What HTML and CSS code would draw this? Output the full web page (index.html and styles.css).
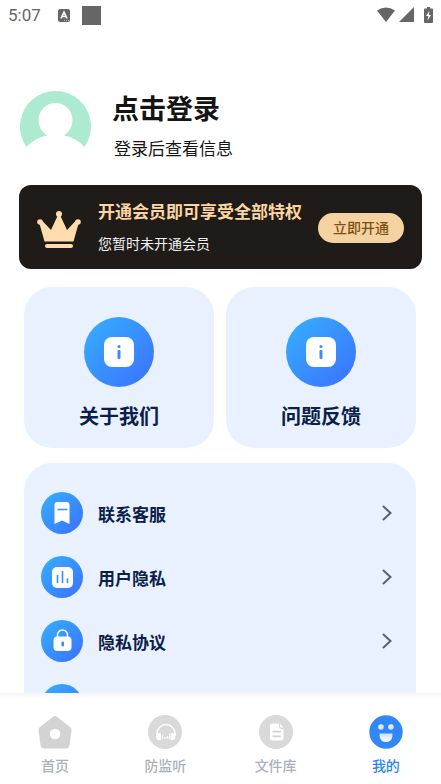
FILE: index.html
```html
<!DOCTYPE html>
<html lang="zh-CN">
<head>
<meta charset="utf-8">
<meta name="viewport" content="width=device-width, initial-scale=1">
<title>我的</title>
<link rel="stylesheet" href="styles.css">
</head>
<body>
<svg class="defs" aria-hidden="true">
  <defs>
    <linearGradient id="smile" x1="0" y1="0" x2="1" y2="1"><stop offset="0" stop-color="#fff"/><stop offset="1" stop-color="#b9d8ff"/></linearGradient>
    <linearGradient id="mouth" x1="0" y1="0" x2="0" y2="1"><stop offset="0" stop-color="#c8e0ff"/><stop offset="1" stop-color="#fff"/></linearGradient>
  </defs>
</svg>
<header class="status">
  <span class="time">5:07</span>
  <svg width="12" height="13" viewBox="0 0 12 13"><rect width="12" height="13" rx="2" fill="#666"/><path d="M3 9.500 6 3.200 9 9.500M4.200 7.500h3.600" fill="none" stroke="#fff" stroke-width="1.600"/><path d="M6 11.500h5" stroke="#bbb" stroke-dasharray="1 1"/></svg>
  <span class="square"></span>
  <span class="signals">
    <svg width="18" height="16" viewBox="0 0 18 16"><path d="M0 3.500Q9-2.500 18 3.500L9 15z" fill="#666"/></svg>
    <svg width="15" height="16" viewBox="0 0 15 16"><path d="M15 0v15H0z" fill="#666"/></svg>
    <svg class="battery" width="9" height="16" viewBox="0 0 9 16"><path d="M1 1.500h2V0h3v1.500h2q1 0 1 1V15q0 1-1 1H1q-1 0-1-1V2.500q0-1 1-1z" fill="#666"/><path d="M5.500 4 2 9h2.300L3.500 13.500 7 8H4.800z" fill="#fff"/></svg>
  </span>
</header>
<main>
  <a class="profile" href="#login">
    <svg width="71" height="71" viewBox="0 0 71 71"><path d="M6.500 56A35.500 35.500 0 1 1 64.500 56Q56 46.500 44 44.500C49 41 52.500 35.500 52.500 29A17 17 0 0 0 18.500 29C18.500 35.500 22 41 27 44.500Q15 46.500 6.500 56z" fill="#adead2"/></svg>
    <span class="who"><strong>点击登录</strong><span>登录后查看信息</span></span>
  </a>
  <section class="vip">
    <svg width="44" height="42" viewBox="0 -4 44 42"><g fill="#fedcae"><circle cx="3" cy="11" r="2.800"/><circle cx="22" cy="3" r="3"/><circle cx="41" cy="11" r="2.800"/><path d="M2 11 5 9.500 14 19 20.500 5h3L30 19l9-9.500L42 11 36.500 30.500h-29z"/><rect x="8" y="33" width="28" height="4" rx="2"/></g></svg>
    <div class="vip-text"><h2>开通会员即可享受全部特权</h2><p>您暂时未开通会员</p></div>
    <button type="button">立即开通</button>
  </section>
  <div class="cards">
    <a class="card" href="#about"><span class="disc large"><svg width="30" height="30" viewBox="0 0 30 30"><rect width="30" height="30" rx="8" fill="#fff"/><circle cx="15" cy="9.500" r="1.600" fill="#3a8cff"/><rect x="13.500" y="13" width="3" height="9" rx="1" fill="#3a8cff"/></svg></span>关于我们</a>
    <a class="card" href="#feedback"><span class="disc large"><svg width="30" height="30" viewBox="0 0 30 30"><rect width="30" height="30" rx="8" fill="#fff"/><circle cx="15" cy="9.500" r="1.600" fill="#3a8cff"/><rect x="13.500" y="13" width="3" height="9" rx="1" fill="#3a8cff"/></svg></span>问题反馈</a>
  </div>
  <ul class="list">
    <li><a href="#service"><span class="disc"><svg width="24" height="24" viewBox="0 0 24 24"><path d="M7 1h8.500q3 0 3 3v19L11 19.500 3.500 23V4q0-3 3-3z" fill="#fff" transform="translate(1 0)"/><path d="M8 8.500h9" stroke="#3a8cff" stroke-width="1.300" stroke-linecap="round"/></svg></span><span>联系客服</span><svg class="chevron" width="10" height="16" viewBox="0 0 10 16"><path d="m1.500 1.500 7 6.500-7 6.500"/></svg></a></li>
    <li><a href="#privacy"><span class="disc"><svg width="24" height="24" viewBox="0 0 24 24"><rect x="2" y="2" width="21" height="21" rx="5" fill="#fff"/><path d="M7.500 10.500v7M12.500 6.500v11M17.500 14v3.500" stroke="#3a8cff" stroke-width="1.600" stroke-linecap="round"/></svg></span><span>用户隐私</span><svg class="chevron" width="10" height="16" viewBox="0 0 10 16"><path d="m1.500 1.500 7 6.500-7 6.500"/></svg></a></li>
    <li><a href="#agreement"><span class="disc"><svg width="24" height="24" viewBox="0 0 24 24"><path d="M7.500 9V6a5 5 0 0 1 10 0v3" fill="none" stroke="#fff" stroke-width="1.600"/><rect x="3.500" y="7.500" width="18" height="14.500" rx="4" fill="#fff"/><rect x="11.500" y="12.500" width="2.500" height="5" rx="1" fill="#3a8cff"/></svg></span><span>隐私协议</span><svg class="chevron" width="10" height="16" viewBox="0 0 10 16"><path d="m1.500 1.500 7 6.500-7 6.500"/></svg></a></li>
    <li><span class="disc"></span></li>
  </ul>
</main>
<nav>
  <a href="#home"><svg width="34" height="34" viewBox="0 0 34 34"><path d="M15 1.700q2-1.400 4 0L32 12q1.700 1.400 1.500 3.500L31.500 30q-.5 3.500-4 3.500h-21Q3 33.500 2.500 30L.5 15.500Q.3 13.400 2 12z" fill="#d3d3d3"/><circle cx="17" cy="19" r="5.300" fill="#fff"/></svg>首页</a>
  <a href="#listen"><svg width="34" height="34" viewBox="0 0 34 34"><circle cx="17" cy="17" r="17" fill="#d9d9d9"/><path d="M9 21v-2.500a9 9 0 0 1 18 0V21" fill="none" stroke="#fff" stroke-width="1.400"/><path d="M8 18.500q4-.5 5 0v6.500q-2 .5-4-.5-1.500-2-1-6zM27.500 18.500q-4-.5-5 0v6.500q2 .5 4-.5 1.500-2 1-6z" fill="#fff"/><path d="M14.500 20v4M17 22v2M19.500 21v3M21.500 18.500v5.500" stroke="#fff" stroke-width="1.200"/></svg>防监听</a>
  <a href="#files"><svg width="34" height="34" viewBox="0 0 34 34"><circle cx="17" cy="17" r="17" fill="#d9d9d9"/><path d="M13.500 8.500h6.500v3q0 2.500 2.500 2.500h2v9q0 2.500-2.500 2.500h-8.500Q11 25.500 11 23V11q0-2.500 2.500-2.500zM21 8.500l3.500 4h-2q-1.500 0-1.500-1.500z" fill="#fff"/><path d="M13.500 16.700h8.500M13.500 21.300h8.500" stroke="#d2d2d2" stroke-width="1.700"/></svg>文件库</a>
  <a class="active" href="#me" aria-current="page"><svg width="34" height="34" viewBox="0 0 34 34"><circle cx="17" cy="17" r="16.700" fill="#3087f5"/><circle cx="12" cy="12" r="2.800" fill="url(#smile)"/><circle cx="22" cy="12" r="2.800" fill="url(#smile)"/><path d="M10.500 18.500h13q.5 8.500-6.500 8.500t-6.500-8.500z" fill="url(#mouth)"/></svg>我的</a>
</nav>
</body>
</html>
```

FILE: styles.css
```css
* { box-sizing: border-box; }
body {
  margin: 0;
  height: 100vh;
  display: flex;
  flex-direction: column;
  overflow: hidden;
  background: #fff;
  color: #0a2048;
  font-family: Roboto, "Noto Sans CJK SC", sans-serif;
  font-weight: 600;
}
svg { display: block; flex: none; }
.defs { position: absolute; width: 0; height: 0; }
a { color: inherit; text-decoration: none; }
h2, p, ul { margin: 0; padding: 0; }

.status {
  flex: none;
  display: flex;
  align-items: center;
  height: 30px;
  padding: 0 8px;
  color: #666;
}
.time { width: 50px; font-size: 17px; font-weight: 400; }
.square { width: 19px; height: 19px; margin-left: 12px; background: #666; }
.signals { display: flex; gap: 4px; margin-left: auto; }
.battery { margin-left: 6px; }

main { flex: 1; min-height: 0; overflow: hidden; }
.profile {
  display: flex;
  gap: 21px;
  padding: 61px 20px 0;
  color: #141414;
}
.who { display: flex; flex-direction: column; gap: 8px; }
.who strong { font-size: 27px; line-height: 38px; font-weight: 600; }
.who span { padding-left: 2px; font-size: 17px; line-height: 24px; font-weight: 400; }

.vip {
  display: flex;
  align-items: center;
  margin: 23px 19px 18px;
  padding: 11px 18px 9px;
  border-radius: 12px;
  background: #1f1b18;
}
.vip-text { flex: 1; margin-left: 17px; white-space: nowrap; }
.vip h2 { color: #fbd5a3; font-size: 17px; line-height: 32px; font-weight: 600; }
.vip p { color: #f2f2f2; font-size: 14px; line-height: 32px; font-weight: 400; }
.vip button {
  width: 86px;
  height: 30px;
  padding: 0 0 2px;
  border: 0;
  border-radius: 15px;
  background: #f5d2a1;
  color: #7c5012;
  font: inherit;
  font-size: 14px;
  font-weight: 500;
}

.cards {
  display: grid;
  grid-template-columns: 1fr 1fr;
  gap: 12px;
  margin: 0 25px 15px 24px;
}
.card {
  display: flex;
  flex-direction: column;
  align-items: center;
  gap: 15px;
  padding: 30px 0 16px;
  border-radius: 28px;
  background: #e9f1ff;
  font-size: 20px;
  line-height: 30px;
}
.disc {
  flex: none;
  display: grid;
  place-items: center;
  width: 42px;
  height: 42px;
  border-radius: 50%;
  background: linear-gradient(135deg, #36b0ff, #3b70ff);
}
.large { width: 70px; height: 70px; }

.list {
  margin: 0 25px 0 24px;
  padding: 18px 24px 18px 17px;
  border-radius: 28px;
  background: #e9f1ff;
  list-style: none;
  font-size: 17px;
}
.list li, .list a { display: flex; align-items: center; height: 64px; }
.list a { flex: 1; gap: 15px; }
.chevron { margin-left: auto; fill: none; stroke: #5c626e; stroke-width: 2; stroke-linecap: round; }

nav {
  flex: none;
  display: grid;
  grid-template-columns: repeat(4, 1fr);
  padding: 22px 0 8px;
  background: linear-gradient(#f4f4f4, #fff 5px);
  color: #adb1b8;
  font-size: 14px;
  font-weight: 500;
  line-height: 20px;
}
nav a { display: flex; flex-direction: column; align-items: center; gap: 7px; }
nav .active { color: #2b83f6; }
```
